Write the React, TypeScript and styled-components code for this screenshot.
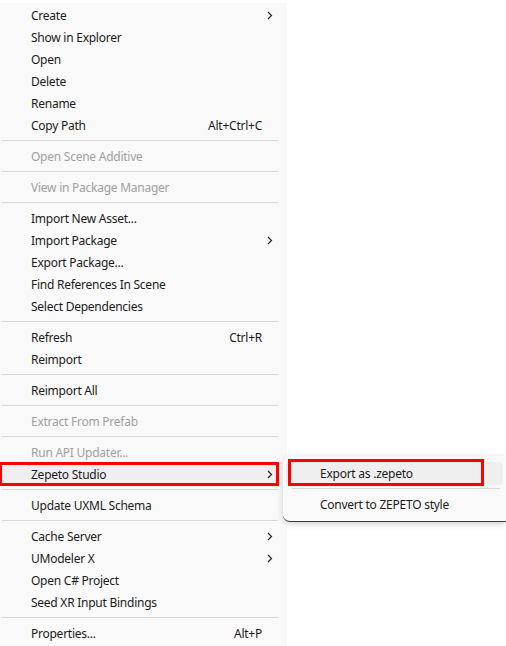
import React from "react";
import styled, { createGlobalStyle } from "styled-components";

const Global = createGlobalStyle`
  html, body { margin: 0; padding: 0; background: #ffffff; }
  body { font-family: "Noto Sans", "Noto Sans CJK KR", sans-serif; }
`;

const Page = styled.div`
  padding-top: 3px;
  width: 506px;
  height: 643px;
  overflow: hidden;
`;

const Menu = styled.div`
  width: 278px;
  padding: 1px 9px 12px 0;
  background: #f9f9f9;
  display: flex;
  flex-direction: column;
  min-height: 630px;
`;

const Row = styled.div<{ $disabled?: boolean; $active?: boolean; $marked?: boolean }>`
  position: relative;
  height: 22px;
  display: flex;
  align-items: center;
  padding-left: 31px;
  font-size: 12px;
  letter-spacing: -0.25px;
  color: ${(p) => (p.$disabled ? "#a0a0a0" : "#1b1b1b")};
  background: ${(p) => (p.$active ? "#efefef" : "transparent")};
  ${(p) => (p.$marked ? "outline: 3px solid #ff0000; outline-offset: -2px;" : "")}
  white-space: nowrap;
`;

const Label = styled.span`
  flex: 1;
`;

const Shortcut = styled.span`
  color: #1b1b1b;
`;

const ArrowSlot = styled.span`
  width: 16px;
  display: flex;
  justify-content: center;
  align-items: center;
`;

const Separator = styled.div`
  height: 1px;
  margin: 4px 0 4px 2px;
  background: #d8d8d8;
`;

const SubMenu = styled.div`
  position: absolute;
  left: 283px;
  top: -7px;
  width: 223px;
  padding: 6px 3px 5px 3px;
  box-sizing: border-box;
  background: #f9f9f9;
  border-radius: 7px 0 0 7px;
  box-shadow: 0 2px 6px rgba(0, 0, 0, 0.18);
  border-bottom: 1px solid #3a3a3a;
  display: flex;
  flex-direction: column;
  z-index: 2;
`;

const SubRow = styled.div<{ $active?: boolean }>`
  position: relative;
  height: 23px;
  display: flex;
  align-items: center;
  padding-left: 34px;
  font-size: 12px;
  letter-spacing: -0.25px;
  color: #1b1b1b;
  border-radius: 4px;
  background: ${(p) => (p.$active ? "#efefef" : "transparent")};
  white-space: nowrap;
`;

const Mark = styled.div`
  position: absolute;
  left: 2px;
  top: -3px;
  width: 196px;
  height: 27px;
  box-sizing: border-box;
  border: 3px solid #ff0000;
  pointer-events: none;
`;

const SubSeparator = styled.div`
  height: 1px;
  margin: 3px 3px 4px 6px;
  background: #d8d8d8;
`;

const Chevron = () => (
  <svg width="6" height="9" viewBox="0 0 6 9">
    <polyline points="1,1 4.5,4.5 1,8" fill="none" stroke="#222" strokeWidth="1.2" />
  </svg>
);

type Item =
  | { sep: true }
  | { label: string; shortcut?: string; sub?: boolean; disabled?: boolean; zepeto?: boolean };

const items: Item[] = [
  { label: "Create", sub: true },
  { label: "Show in Explorer" },
  { label: "Open" },
  { label: "Delete" },
  { label: "Rename" },
  { label: "Copy Path", shortcut: "Alt+Ctrl+C" },
  { sep: true },
  { label: "Open Scene Additive", disabled: true },
  { sep: true },
  { label: "View in Package Manager", disabled: true },
  { sep: true },
  { label: "Import New Asset..." },
  { label: "Import Package", sub: true },
  { label: "Export Package..." },
  { label: "Find References In Scene" },
  { label: "Select Dependencies" },
  { sep: true },
  { label: "Refresh", shortcut: "Ctrl+R" },
  { label: "Reimport" },
  { sep: true },
  { label: "Reimport All" },
  { sep: true },
  { label: "Extract From Prefab", disabled: true },
  { sep: true },
  { label: "Run API Updater...", disabled: true },
  { label: "Zepeto Studio", sub: true, zepeto: true },
  { sep: true },
  { label: "Update UXML Schema" },
  { sep: true },
  { label: "Cache Server", sub: true },
  { label: "UModeler X", sub: true },
  { label: "Open C# Project" },
  { label: "Seed XR Input Bindings" },
  { sep: true },
  { label: "Properties...", shortcut: "Alt+P" },
];

export default function App() {
  return (
    <Page>
      <Global />
      <Menu>
        {items.map((it, i) =>
          "sep" in it ? (
            <Separator key={i} />
          ) : (
            <Row key={i} $disabled={it.disabled} $active={it.zepeto} $marked={it.zepeto}>
              <Label>{it.label}</Label>
              {it.shortcut && <Shortcut>{it.shortcut}</Shortcut>}
              <ArrowSlot>{it.sub && <Chevron />}</ArrowSlot>
              {it.zepeto && (
                <SubMenu>
                  <SubRow $active>
                    Export as .zepeto
                    <Mark />
                  </SubRow>
                  <SubSeparator />
                  <SubRow>Convert to ZEPETO style</SubRow>
                </SubMenu>
              )}
            </Row>
          )
        )}
      </Menu>
    </Page>
  );
}
